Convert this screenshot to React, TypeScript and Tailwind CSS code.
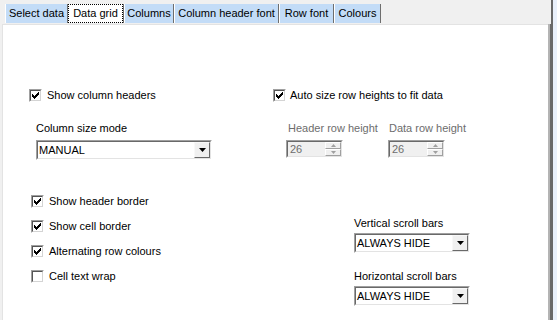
import React from 'react';

const tabs = [
  { label: 'Select data', w: 'w-[63px]' },
  { label: 'Data grid', w: 'w-[56px]', selected: true },
  { label: 'Columns', w: 'w-[50px]' },
  { label: 'Column header font', w: 'w-[105px]' },
  { label: 'Row font', w: 'w-[55px]' },
  { label: 'Colours', w: 'w-[47px]' },
];

function Tick() {
  return (
    <svg width="7" height="7" viewBox="0 0 7 7" shapeRendering="crispEdges">
      <polygon points="0,2 2,4 7,-1 7,2 2,7 0,5" fill="#000" />
    </svg>
  );
}

function Check({ label, checked = false, gap = 'ml-[5px]' }: { label: string; checked?: boolean; gap?: string }) {
  return (
    <div className="flex items-center h-[13px]">
      <span className="flex w-[13px] h-[13px] border border-t-[#a0a0a0] border-l-[#a0a0a0] border-b-white border-r-white">
        <span className="flex flex-1 items-center justify-center bg-white border border-t-[#555] border-l-[#555] border-b-[#d4d4d4] border-r-[#d4d4d4]">
          {checked && <Tick />}
        </span>
      </span>
      <span className={`${gap} whitespace-nowrap`}>{label}</span>
    </div>
  );
}

function Sunken({ className, children }: { className: string; children: React.ReactNode }) {
  return (
    <div className={`flex border border-t-[#a0a0a0] border-l-[#a0a0a0] border-b-white border-r-white ${className}`}>
      <div className="flex flex-1 border border-t-[#696969] border-l-[#696969] border-b-[#e3e3e3] border-r-[#e3e3e3]">
        {children}
      </div>
    </div>
  );
}

function Combo({ value, w }: { value: string; w: string }) {
  return (
    <Sunken className={`${w} h-[20px]`}>
      <div className="flex flex-1 items-center bg-white pl-[1px] leading-[13px]">{value}</div>
      <div className="flex w-[16px] items-center justify-center bg-[#f0f0f0] border border-t-[#f8f8f8] border-l-[#f8f8f8] border-b-[#696969] border-r-[#696969]">
        <svg width="7" height="4" viewBox="0 0 7 4">
          <polygon points="0,0 7,0 3.5,4" fill="#000" />
        </svg>
      </div>
    </Sunken>
  );
}

function Spin({ value }: { value: string }) {
  return (
    <Sunken className="w-[57px] h-[18px]">
      <div className="flex flex-1 items-center bg-[#f0f0f0] pl-[2px] text-[#6d6d6d] leading-[13px]">{value}</div>
      <div className="flex w-[16px] flex-col bg-[#f0f0f0]">
        <div className="flex flex-1 items-center justify-center border border-t-white border-l-white border-b-[#a0a0a0] border-r-[#a0a0a0]">
          <svg width="5" height="3" viewBox="0 0 5 3">
            <polygon points="2.5,0 5,3 0,3" fill="#a0a0a0" />
          </svg>
        </div>
        <div className="flex flex-1 items-center justify-center border border-t-white border-l-white border-b-[#a0a0a0] border-r-[#a0a0a0]">
          <svg width="5" height="3" viewBox="0 0 5 3">
            <polygon points="0,0 5,0 2.5,3" fill="#a0a0a0" />
          </svg>
        </div>
      </div>
    </Sunken>
  );
}

export default function App() {
  return (
    <div className="flex w-[557px] h-[320px] overflow-hidden bg-[#f0f0f0] text-[11px] leading-[13px] text-black font-['Liberation_Sans',Arial,sans-serif]">
      <div className="flex w-[551px] flex-col">
        {/* Tab strip */}
        <div className="flex h-[24px] pt-[4px] pl-[5px]">
          {tabs.map((t) =>
            t.selected ? (
              <div key={t.label} className={`flex ${t.w} h-[19px] bg-white border-r border-r-[#6e6e6e]`}>
                <div className="flex flex-1 items-center justify-center border border-dotted border-black">
                  {t.label}
                </div>
              </div>
            ) : (
              <div
                key={t.label}
                className={`flex ${t.w} h-[19px] items-center justify-center whitespace-nowrap bg-[#c3dcf7] border-l border-l-white border-r border-r-[#6e6e6e]`}
              >
                {t.label}
              </div>
            )
          )}
        </div>

        {/* Page */}
        <div className="flex flex-1 pl-[2px]">
          <div className="flex-1 bg-white border-t border-l border-[#e3e3e3] pt-[64px]">
            <div className="grid grid-cols-[244px_1fr] pl-[26px]">
              <div className="flex flex-col">
                <Check label="Show column headers" checked />
                <div className="ml-[7px] mt-[20px]">Column size mode</div>
                <div className="ml-[7px] mt-[5px]">
                  <Combo value="MANUAL" w="w-[176px]" />
                </div>
              </div>
              <div className="flex flex-col">
                <Check label="Auto size row heights to fit data" checked gap="ml-[4px]" />
                <div className="mt-[20px] ml-[13px] flex">
                  <div className="flex w-[102px] flex-col">
                    <span className="pl-[2px] text-[#6d6d6d]">Header row height</span>
                    <div className="mt-[5px]">
                      <Spin value="26" />
                    </div>
                  </div>
                  <div className="flex flex-col">
                    <span className="pl-[1px] text-[#6d6d6d]">Data row height</span>
                    <div className="mt-[5px]">
                      <Spin value="26" />
                    </div>
                  </div>
                </div>
              </div>
            </div>

            <div className="mt-[35px] flex pl-[28px]">
              <div className="flex w-[323px] flex-col gap-[12px]">
                <Check label="Show header border" checked />
                <Check label="Show cell border" checked />
                <Check label="Alternating row colours" checked />
                <Check label="Cell text wrap" />
              </div>
              <div className="mt-[22px] flex flex-col">
                <span>Vertical scroll bars</span>
                <div className="mt-[3px]">
                  <Combo value="ALWAYS HIDE" w="w-[116px]" />
                </div>
                <span className="mt-[17px]">Horizontal scroll bars</span>
                <div className="mt-[3px]">
                  <Combo value="ALWAYS HIDE" w="w-[116px]" />
                </div>
              </div>
            </div>
          </div>
          <div className="w-[2px] bg-[#b4b4b4]" />
          <div className="w-[1px] bg-[#696969]" />
        </div>
      </div>
      <div className="w-[2px] bg-[#696969]" />
      <div className="flex-1 bg-[#e9f0fb]" />
    </div>
  );
}
